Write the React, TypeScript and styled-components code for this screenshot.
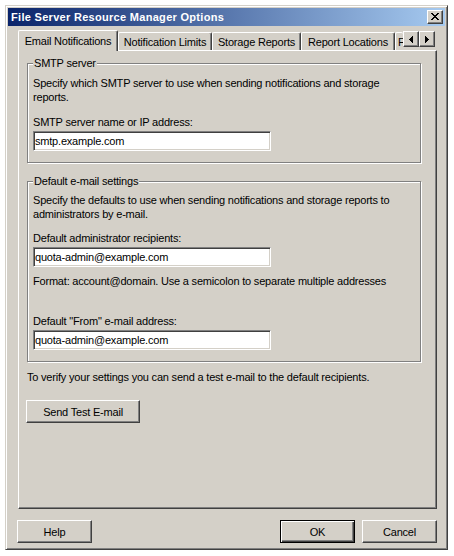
import styled, { createGlobalStyle, css } from 'styled-components';

const GlobalStyle = createGlobalStyle`
  html, body {
    margin: 0;
    background: #fff;
  }
  body {
    font-family: "Liberation Sans", Arial, sans-serif;
    font-size: 11px;
    letter-spacing: -0.2px;
    color: #000;
  }
`;

const FACE = '#d4d0c8';

const raised = css`
  border: 1px solid;
  border-color: #fff #404040 #404040 #fff;
  box-shadow: inset -1px -1px #808080;
`;

const closeGlyph = [
  '##....##',
  '.##..##.',
  '..####..',
  '...##...',
  '..####..',
  '.##..##.',
  '##....##',
];

const leftGlyph = ['...#', '..##', '.###', '####', '.###', '..##', '...#'];
const rightGlyph = ['#...', '##..', '###.', '####', '###.', '##..', '#...'];

const PixelGlyph = ({ rows }: { rows: string[] }) => (
  <svg width={rows[0].length} height={rows.length} shapeRendering="crispEdges">
    {rows.flatMap((row, y) =>
      row.split('').map((c, x) =>
        c === '#' ? <rect key={`${x}-${y}`} x={x} y={y} width={1} height={1} fill="#000" /> : null
      )
    )}
  </svg>
);

const tabs = [
  { label: 'Email Notifications', width: 100 },
  { label: 'Notification Limits', width: 94 },
  { label: 'Storage Reports', width: 89 },
  { label: 'Report Locations', width: 94 },
  { label: 'File Screen Audit', width: 8, clipped: true },
];

const App = () => {
  return (
    <>
      <GlobalStyle />
      <Window>
        <TitleBar>
          <span>File Server Resource Manager Options</span>
          <CaptionButton>
            <PixelGlyph rows={closeGlyph} />
          </CaptionButton>
        </TitleBar>
        <Body>
          <TabStrip>
            {tabs.map((t, i) => (
              <Tab key={t.label} $width={t.width} $active={i === 0} $clipped={t.clipped}>
                {t.label}
              </Tab>
            ))}
            <ScrollArrows>
              <ArrowButton>
                <PixelGlyph rows={leftGlyph} />
              </ArrowButton>
              <ArrowButton>
                <PixelGlyph rows={rightGlyph} />
              </ArrowButton>
            </ScrollArrows>
          </TabStrip>
          <Panel>
            <Group>
              <Legend>SMTP server</Legend>
              <Text>
                Specify which SMTP server to use when sending notifications and storage reports.
              </Text>
              <Label $gap={11}>SMTP server name or IP address:</Label>
              <TextField readOnly value="smtp.example.com" />
            </Group>
            <Group $gap={11}>
              <Legend>Default e-mail settings</Legend>
              <Text $first>
                Specify the defaults to use when sending notifications and storage reports to
                administrators by e-mail.
              </Text>
              <Label $gap={10}>Default administrator recipients:</Label>
              <TextField readOnly value="quota-admin@example.com" />
              <Label $gap={7}>
                Format: account@domain. Use a semicolon to separate multiple addresses
              </Label>
              <Label $gap={26}>Default "From" e-mail address:</Label>
              <TextField readOnly value="quota-admin@example.com" />
            </Group>
            <Note>To verify your settings you can send a test e-mail to the default recipients.</Note>
            <SendButton $width={114}>Send Test E-mail</SendButton>
          </Panel>
          <Footer>
            <Button $width={75}>Help</Button>
            <FooterRight>
              <Button $width={75} $default>
                OK
              </Button>
              <Button $width={75}>Cancel</Button>
            </FooterRight>
          </Footer>
        </Body>
      </Window>
    </>
  );
};

export default App;

const Window = styled.div`
  box-sizing: border-box;
  width: 443px;
  height: 545px;
  margin: 5px 0 0 5px;
  padding: 2px;
  display: flex;
  flex-direction: column;
  background: ${FACE};
  border: 1px solid;
  border-color: ${FACE} #404040 #404040 ${FACE};
  box-shadow: inset 1px 1px #fff, inset -1px -1px #808080;
`;

const TitleBar = styled.div`
  height: 18px;
  flex: none;
  display: flex;
  align-items: center;
  justify-content: space-between;
  padding: 0 2px 0 3px;
  background: linear-gradient(to right, #0a246a, #a6caf0);
  color: #fff;
  font-weight: bold;
  font-size: 11px;
  letter-spacing: 0.3px;
  white-space: nowrap;
`;

const CaptionButton = styled.div`
  box-sizing: border-box;
  width: 16px;
  height: 14px;
  display: flex;
  align-items: center;
  justify-content: center;
  padding: 0 1px 1px 0;
  background: ${FACE};
  ${raised}
`;

const Body = styled.div`
  flex: 1;
  display: flex;
  flex-direction: column;
  padding: 4px 8px 4px 10px;
`;

const TabStrip = styled.div`
  position: relative;
  z-index: 1;
  height: 20px;
  flex: none;
  display: flex;
  align-items: flex-end;
`;

const Tab = styled.div<{ $active?: boolean; $width: number; $clipped?: boolean }>`
  box-sizing: border-box;
  flex: none;
  width: ${({ $width }) => $width}px;
  height: ${({ $active }) => ($active ? 21 : 18)}px;
  margin-bottom: ${({ $active }) => ($active ? -1 : 0)}px;
  padding-top: ${({ $active }) => ($active ? 3 : 2)}px;
  line-height: 14px;
  display: flex;
  justify-content: ${({ $clipped }) => ($clipped ? 'flex-start' : 'center')};
  white-space: nowrap;
  overflow: hidden;
  background: ${FACE};
  border-left: 1px solid #fff;
  border-top: 1px solid #fff;
  border-top-left-radius: 2px;
  border-top-right-radius: 2px;
  ${({ $clipped }) =>
    $clipped
      ? css`padding-left: 2px;`
      : css`
          border-right: 1px solid #404040;
          box-shadow: inset -1px 0 #808080;
        `}
`;

const ScrollArrows = styled.div`
  display: flex;
  flex: none;
  margin: 0 2px 3px 0;
`;

const ArrowButton = styled.div`
  box-sizing: border-box;
  width: 16px;
  height: 16px;
  display: flex;
  align-items: center;
  justify-content: center;
  background: ${FACE};
  ${raised}
`;

const Panel = styled.div`
  flex: 1;
  box-sizing: border-box;
  display: flex;
  flex-direction: column;
  align-items: flex-start;
  padding: 5px 15px 0 8px;
  border: 1px solid;
  border-color: #fff #404040 #404040 #fff;
  box-shadow: inset -1px -1px #808080;
`;

const Group = styled.fieldset<{ $gap?: number }>`
  align-self: stretch;
  min-width: 0;
  margin: ${({ $gap }) => $gap ?? 0}px 0 0 0;
  padding: 5px 5px 11px 5px;
  display: flex;
  flex-direction: column;
  align-items: flex-start;
  border: 1px solid #808080;
  box-shadow: 1px 1px #fff, inset 1px 1px #fff;
`;

const Legend = styled.legend`
  padding: 0 1px;
  line-height: 14px;
  background: ${FACE};
`;

const Text = styled.div<{ $first?: boolean }>`
  line-height: 14px;
  margin-top: ${({ $first }) => ($first ? 0 : 1)}px;
`;

const Label = styled.div<{ $gap: number }>`
  line-height: 14px;
  margin-top: ${({ $gap }) => $gap}px;
`;

const TextField = styled.input`
  box-sizing: border-box;
  width: 238px;
  height: 20px;
  margin: 2px 0 0;
  padding: 0 0 0 1px;
  font-family: "Liberation Sans", Arial, sans-serif;
  font-size: 11px;
  letter-spacing: inherit;
  color: #000;
  background: #fff;
  border: 1px solid;
  border-color: #808080 #fff #fff #808080;
  box-shadow: inset 1px 1px #404040, inset -1px -1px ${FACE};
  outline: none;
`;

const Note = styled.div`
  line-height: 14px;
  margin-top: 8px;
`;

const Button = styled.button<{ $width: number; $default?: boolean }>`
  box-sizing: border-box;
  width: ${({ $width }) => $width}px;
  height: 23px;
  padding: 0;
  font-family: "Liberation Sans", Arial, sans-serif;
  font-size: 11px;
  letter-spacing: inherit;
  color: #000;
  background: ${FACE};
  ${({ $default }) =>
    $default
      ? css`
          border: 1px solid #000;
          box-shadow: inset 1px 1px #fff, inset -1px -1px #404040, inset -2px -2px #808080;
        `
      : raised}
`;

const SendButton = styled(Button)`
  margin: 16px 0 0 -1px;
`;

const Footer = styled.div`
  flex: none;
  display: flex;
  justify-content: space-between;
  margin-top: 11px;
  margin-left: -1px;
`;

const FooterRight = styled.div`
  display: flex;
  gap: 7px;
`;
